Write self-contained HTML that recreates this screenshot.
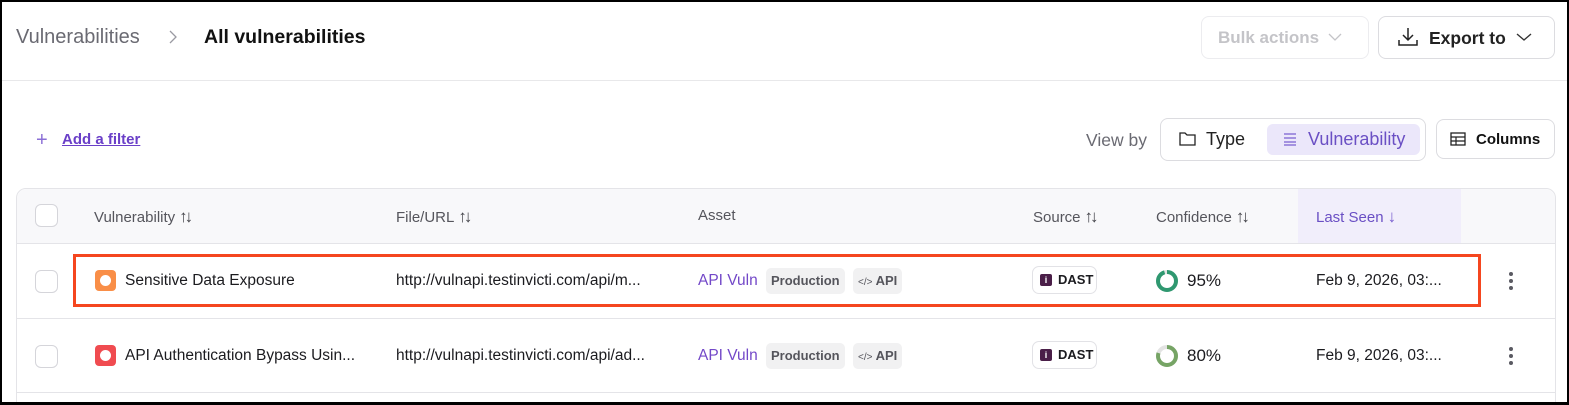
<!DOCTYPE html>
<html><head><style>
*{box-sizing:border-box;margin:0;padding:0}
html,body{width:1569px;height:405px;overflow:hidden}
body{background:#fff;font-family:"Liberation Sans",sans-serif;position:relative;color:#1b1b1f}
.a{position:absolute;white-space:nowrap}
.btn{position:absolute;border:1px solid #dcdce0;border-radius:8px;background:#fff}
.th{position:absolute;top:207px;font-size:15px;color:#55555c}
.th s{text-decoration:none;font-size:17px;letter-spacing:-3px;margin-left:4px;color:#44444a}
.cell{position:absolute;font-size:15.5px}
.cb{position:absolute;left:35px;width:23px;height:23px;border:1px solid #d5d5da;border-radius:6px;background:#fff}
.tag{position:absolute;height:26px;border-radius:5px;background:#f1f1f2;font-size:13px;font-weight:bold;color:#55555c;line-height:26px;padding:0 5px}
.dast{position:absolute;left:1032px;width:65px;height:28px;border:1px solid #e2e2e6;border-radius:7px;font-size:13px;font-weight:bold;line-height:26px;padding-left:25px}
.dast i{position:absolute;left:7px;top:7px;width:12px;height:12px;background:#4a1e48;border-radius:2px;color:#fff;font-size:9px;font-style:normal;text-align:center;line-height:12px}
.dots{position:absolute;left:1509px;width:4px}
.dots b{display:block;width:4px;height:4px;border-radius:2px;background:#5a5a62;margin-bottom:3px}
</style></head><body>
<div class="a" style="left:16px;top:26px;font-size:20px;color:#6a6a72">Vulnerabilities</div>
<svg class="a" style="left:168px;top:30px" width="10" height="14"><path d="M2 1l6 6-6 6" stroke="#9a9aa2" fill="none" stroke-width="1.3"/></svg>
<div class="a" style="left:204px;top:26px;font-size:19.5px;font-weight:bold;color:#111">All vulnerabilities</div>
<div class="btn" style="left:1201px;top:16px;width:168px;height:43px;border-color:#ececef"></div>
<div class="a" style="left:1218px;top:28px;font-size:17px;font-weight:bold;color:#c4c4c8">Bulk actions</div>
<svg class="a" style="left:1328px;top:32px" width="14" height="10"><path d="M1 2l6 6 6-6" stroke="#c4c4c8" fill="none" stroke-width="1.3"/></svg>
<div class="btn" style="left:1378px;top:16px;width:177px;height:43px"></div>
<svg class="a" style="left:1397px;top:26px" width="22" height="22"><path d="M11 2v12M6 9l5 5 5-5M2 14v5h18v-5" stroke="#222" fill="none" stroke-width="1.5"/></svg>
<div class="a" style="left:1429px;top:28px;font-size:17.5px;font-weight:bold;color:#222">Export to</div>
<svg class="a" style="left:1516px;top:32px" width="16" height="10"><path d="M1 2l7 6 7-6" stroke="#333" fill="none" stroke-width="1.4"/></svg>
<div class="a" style="left:0;top:80px;width:1569px;height:1px;background:#e8e8ea"></div>

<div class="a" style="left:36px;top:129px;font-size:20px;color:#8b6fd6">+</div>
<div class="a" style="left:62px;top:131px;font-size:15px;font-weight:bold;color:#6a3fc8;text-decoration:underline">Add a filter</div>
<div class="a" style="left:1086px;top:130px;font-size:17.5px;color:#6a6a72">View by</div>
<div class="btn" style="left:1160px;top:118px;width:266px;height:43px"></div>
<svg class="a" style="left:1179px;top:131px" width="17" height="15"><path d="M1 2h5l2 2h8v10H1z" stroke="#222" fill="none" stroke-width="1.3"/></svg>
<div class="a" style="left:1206px;top:129px;font-size:18px;color:#222">Type</div>
<div class="a" style="left:1267px;top:124px;width:153px;height:31px;background:#ebe7fa;border-radius:6px"></div>
<svg class="a" style="left:1283px;top:132px" width="14" height="14"><path d="M1 2h12M1 6h12M1 10h12M1 13h12" stroke="#7a5fd0" fill="none" stroke-width="1.3"/></svg>
<div class="a" style="left:1308px;top:129px;font-size:18px;color:#6a4fc4">Vulnerability</div>
<div class="btn" style="left:1436px;top:119px;width:119px;height:40px"></div>
<svg class="a" style="left:1450px;top:132px" width="16" height="14"><rect x="1" y="1" width="14" height="12" fill="none" stroke="#222" stroke-width="1.3"/><path d="M1 5h14M1 9h14M6 5v8" stroke="#222" stroke-width="1.2"/></svg>
<div class="a" style="left:1476px;top:131px;font-size:15px;font-weight:bold;color:#111">Columns</div>

<div class="a" style="left:16px;top:188px;width:1540px;height:230px;border:1px solid #e4e4e8;border-radius:10px"></div>
<div class="a" style="left:17px;top:189px;width:1538px;height:54px;background:#f8f8fa;border-radius:10px 10px 0 0"></div>
<div class="a" style="left:1298px;top:189px;width:163px;height:54px;background:#f1eefb"></div>
<div class="a" style="left:17px;top:243px;width:1538px;height:1px;background:#e4e4e8"></div>
<div class="a" style="left:17px;top:318px;width:1538px;height:1px;background:#e4e4e8"></div>
<div class="a" style="left:17px;top:392px;width:1538px;height:1px;background:#e4e4e8"></div>
<div class="cb" style="top:204px"></div>
<div class="th" style="left:94px">Vulnerability<s>↑↓</s></div>
<div class="th" style="left:396px">File/URL<s>↑↓</s></div>
<div class="th" style="left:698px">Asset</div>
<div class="th" style="left:1033px">Source<s>↑↓</s></div>
<div class="th" style="left:1156px">Confidence<s>↑↓</s></div>
<div class="th" style="left:1316px;color:#6a4fc4">Last Seen<s style="color:#7a5fd0">↓</s></div>

<div class="cb" style="top:270px"></div>
<div class="a" style="left:95px;top:270px;width:21px;height:21px;border-radius:4px;background:#f98e47"><div style="margin:5px;width:11px;height:11px;border-radius:50%;background:#fff"></div></div>
<div class="cell" style="left:125px;top:272px">Sensitive Data Exposure</div>
<div class="cell" style="left:396px;top:272px">http://vulnapi.testinvicti.com/api/m...</div>
<div class="cell" style="left:698px;top:272px;color:#7348c8">API Vuln</div>
<div class="tag" style="left:766px;top:268px">Production</div>
<div class="tag" style="left:853px;top:268px"><span style="font-weight:normal;font-size:10px">&lt;/&gt;</span> API</div>
<div class="dast" style="top:266px"><i>i</i>DAST</div>
<svg class="a" style="left:1155px;top:269px" width="24" height="24"><circle cx="12" cy="12" r="9" fill="none" stroke="#e3e3e3" stroke-width="4"/><circle cx="12" cy="12" r="9" fill="none" stroke="#2f9870" stroke-width="4" stroke-dasharray="53.7 56.5" transform="rotate(-90 12 12)"/></svg>
<div class="cell" style="left:1187px;top:271px;font-size:17px">95%</div>
<div class="cell" style="left:1316px;top:272px">Feb 9, 2026, 03:...</div>
<div class="dots" style="top:272px"><b></b><b></b><b></b></div>

<div class="cb" style="top:345px"></div>
<div class="a" style="left:95px;top:345px;width:21px;height:21px;border-radius:4px;background:#f04b50"><div style="margin:5px;width:11px;height:11px;border-radius:50%;background:#fff"></div></div>
<div class="cell" style="left:125px;top:347px">API Authentication Bypass Usin...</div>
<div class="cell" style="left:396px;top:347px">http://vulnapi.testinvicti.com/api/ad...</div>
<div class="cell" style="left:698px;top:347px;color:#7348c8">API Vuln</div>
<div class="tag" style="left:766px;top:343px">Production</div>
<div class="tag" style="left:853px;top:343px"><span style="font-weight:normal;font-size:10px">&lt;/&gt;</span> API</div>
<div class="dast" style="top:341px"><i>i</i>DAST</div>
<svg class="a" style="left:1155px;top:344px" width="24" height="24"><circle cx="12" cy="12" r="9" fill="none" stroke="#e3e3e3" stroke-width="4"/><circle cx="12" cy="12" r="9" fill="none" stroke="#76a465" stroke-width="4" stroke-dasharray="45.2 56.5" transform="rotate(-90 12 12)"/></svg>
<div class="cell" style="left:1187px;top:346px;font-size:17px">80%</div>
<div class="cell" style="left:1316px;top:347px">Feb 9, 2026, 03:...</div>
<div class="dots" style="top:347px"><b></b><b></b><b></b></div>

<div class="a" style="left:73px;top:254px;width:1408px;height:53px;border:3px solid #f5461f"></div>
<div class="a" style="left:0;top:0;width:1569px;height:405px;border:2px solid #000;border-bottom-width:3px"></div>
</body></html>
